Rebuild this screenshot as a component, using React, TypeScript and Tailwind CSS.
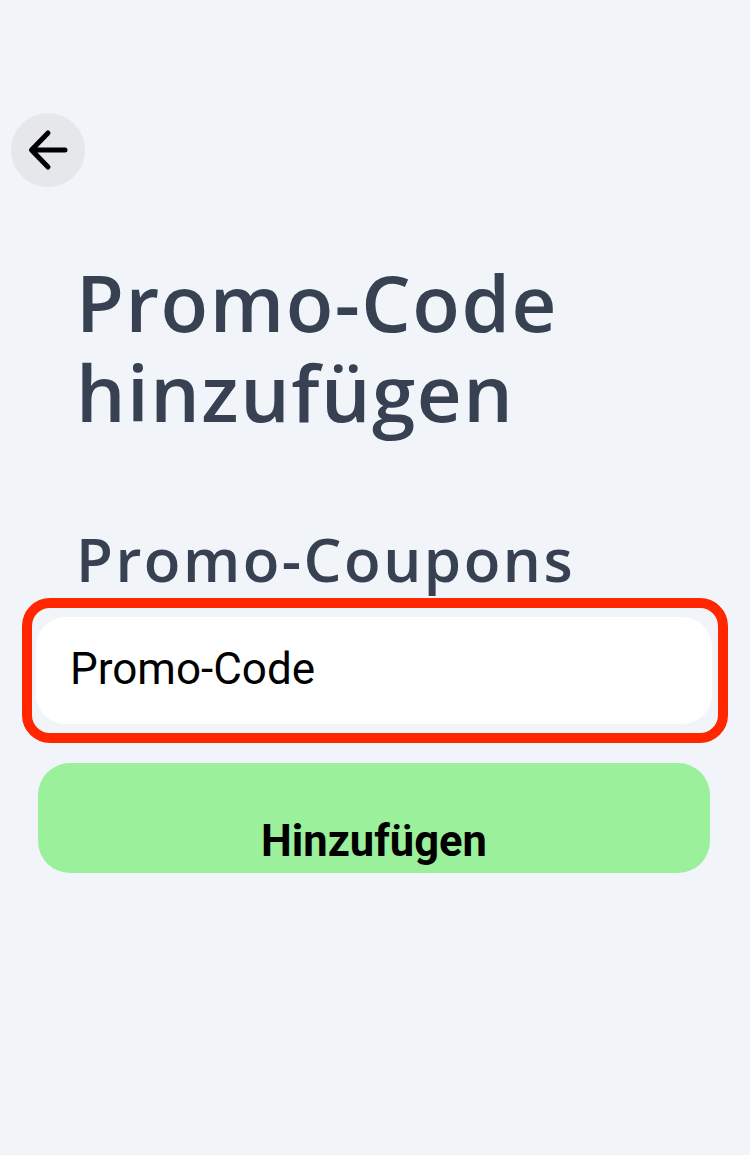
import { useState } from "react";

const BackButton = () => (
  <button
    type="button"
    aria-label="Zurück"
    className="ml-[11px] flex h-[74px] w-[74px] items-center justify-center rounded-full bg-[#e5e7eb]"
  >
    <svg width="74" height="74" viewBox="0 0 74 74" fill="none">
      <path
        d="M21 37H54M37 20L20.5 37L37 54"
        stroke="#000"
        strokeWidth="5"
        strokeLinecap="round"
        strokeLinejoin="round"
      />
    </svg>
  </button>
);

const App = () => {
  const [code, setCode] = useState("");

  return (
    <div className="min-h-[1155px] bg-[#f1f5f9] pt-[113px] font-['Roboto',sans-serif]">
      <BackButton />

      {/* Title */}
      <h1 className="mt-[70px] pl-[76px] font-['Open_Sans',sans-serif] text-[78px] font-semibold leading-[90px] tracking-[1.5px] text-[#374151]">
        Promo-Code
        <br />
        hinzufügen
      </h1>

      <h2 className="mt-[87px] pl-[76px] font-['Open_Sans',sans-serif] text-[60px] font-semibold leading-[70px] tracking-[2.5px] text-[#374151]">
        Promo-Coupons
      </h2>

      {/* Highlighted input */}
      <div className="mt-[4px] ml-[22px] w-[706px] rounded-[28px] border-[10px] border-[#ff2600] pt-[9px] pb-[9px] pl-[4px] pr-[6px]">
        <input
          value={code}
          onChange={(e) => setCode(e.target.value)}
          placeholder="Promo-Code"
          className="block h-[107px] w-full rounded-[30px] bg-white pb-[4px] pl-[34px] text-[44px] text-black outline-none placeholder:text-black"
        />
      </div>

      <button
        type="button"
        className="mt-[20px] ml-[38px] block h-[110px] w-[672px] rounded-[32px] bg-[#9bf09b] pt-[47px] text-[43.5px] leading-[50px] font-bold text-black"
      >
        Hinzufügen
      </button>
    </div>
  );
};

export default App;
